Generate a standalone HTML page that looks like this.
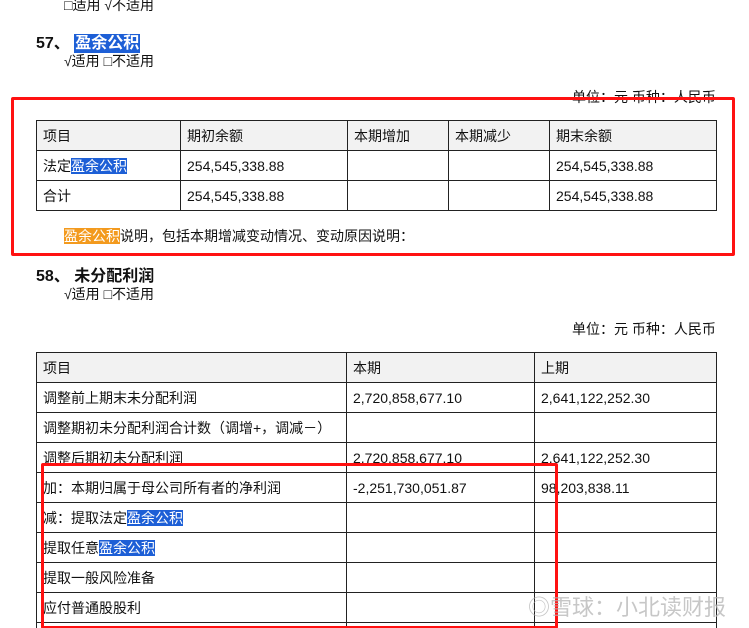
<!DOCTYPE html>
<html><head><meta charset="utf-8"><style>
html,body{margin:0;width:749px;height:628px;overflow:hidden}
body{background:#fff;font-family:"Liberation Sans","Noto Sans CJK SC",sans-serif;color:#111;font-size:14px}
#w{position:relative;width:749px;height:628px;overflow:hidden}
.a{position:absolute;white-space:nowrap}
table{position:absolute;border-collapse:collapse;table-layout:fixed}
td{border:1.5px solid #222;height:29px;padding:0 0 0 6px;font-size:14px;white-space:nowrap;overflow:hidden;vertical-align:middle}
tr.h td{background:#f2f2f2}
.bl{background:#1d5fd6;color:#fff}
.or{background:#f39a1e;color:#fff}
.red{position:absolute;border:3px solid #f11;border-radius:2px}
</style></head><body><div id="w">
<div class="a" style="left:64px;top:-5px">□适用 √不适用</div>
<div class="a" style="left:36px;top:29px;font-size:16px;font-weight:bold">57、 <span class="bl" style="padding:1px 1px">盈余公积</span></div>
<div class="a" style="left:64px;top:51px">√适用 □不适用</div>
<div class="a" style="left:572px;top:87px">单位：元 币种：人民币</div>
<table style="left:36px;top:120px;width:680px">
<colgroup><col style="width:144px"><col style="width:167px"><col style="width:101px"><col style="width:101px"><col style="width:167px"></colgroup>
<tr class="h"><td>项目</td><td>期初余额</td><td>本期增加</td><td>本期减少</td><td>期末余额</td></tr>
<tr><td>法定<span class="bl">盈余公积</span></td><td>254,545,338.88</td><td></td><td></td><td>254,545,338.88</td></tr>
<tr><td>合计</td><td>254,545,338.88</td><td></td><td></td><td>254,545,338.88</td></tr>
</table>
<div class="a" style="left:64px;top:226px"><span class="or">盈余公积</span>说明，包括本期增减变动情况、变动原因说明：</div>
<div class="red" style="left:11px;top:97px;width:718px;height:153px"></div>
<div class="a" style="left:36px;top:262px;font-size:16px;font-weight:bold">58、 未分配利润</div>
<div class="a" style="left:64px;top:284px">√适用 □不适用</div>
<div class="a" style="left:572px;top:319px">单位：元 币种：人民币</div>
<table style="left:36px;top:352px;width:680px">
<colgroup><col style="width:310px"><col style="width:188px"><col style="width:182px"></colgroup>
<tr class="h"><td>项目</td><td>本期</td><td>上期</td></tr>
<tr><td>调整前上期末未分配利润</td><td>2,720,858,677.10</td><td>2,641,122,252.30</td></tr>
<tr><td>调整期初未分配利润合计数（调增+，调减－）</td><td></td><td></td></tr>
<tr><td>调整后期初未分配利润</td><td>2,720,858,677.10</td><td>2,641,122,252.30</td></tr>
<tr><td>加：本期归属于母公司所有者的净利润</td><td>-2,251,730,051.87</td><td>98,203,838.11</td></tr>
<tr><td>减：提取法定<span class="bl">盈余公积</span></td><td></td><td></td></tr>
<tr><td>提取任意<span class="bl">盈余公积</span></td><td></td><td></td></tr>
<tr><td>提取一般风险准备</td><td></td><td></td></tr>
<tr><td>应付普通股股利</td><td></td><td></td></tr>
<tr><td>&nbsp;</td><td></td><td></td></tr>
</table>
<div class="red" style="left:41px;top:463px;width:511px;height:160px"></div>
<div class="a" style="left:528px;top:590px;font-size:22px;color:rgba(180,180,180,0.75)">◎雪球：小北读财报</div>
</div></body></html>
